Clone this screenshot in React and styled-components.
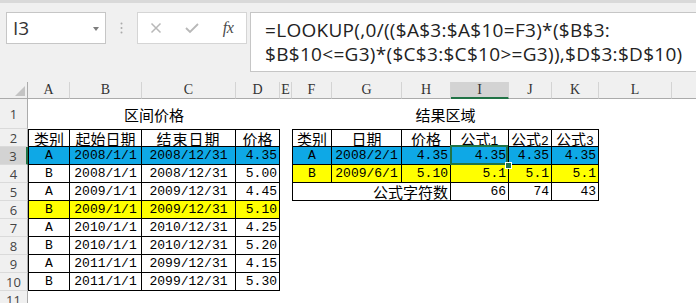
import React from "react";
import styled, { createGlobalStyle, css } from "styled-components";

const BLUE = "#0ea8e6";
const YELLOW = "#ffff00";
const GREEN = "#217346";

// column M runs past the right edge, so its letter is never on screen
const COLS = [
  { key: "A", w: 42 },
  { key: "B", w: 72 },
  { key: "C", w: 94 },
  { key: "D", w: 44 },
  { key: "E", w: 12 },
  { key: "F", w: 40 },
  { key: "G", w: 70 },
  { key: "H", w: 49 },
  { key: "I", w: 58 },
  { key: "J", w: 43 },
  { key: "K", w: 47 },
  { key: "L", w: 73 },
  { key: "M", w: 80, hidden: true },
];

const PRICES = [
  ["A", "2008/1/1", "2008/12/31", "4.35", BLUE],
  ["B", "2008/1/1", "2008/12/31", "5.00"],
  ["A", "2009/1/1", "2009/12/31", "4.45"],
  ["B", "2009/1/1", "2009/12/31", "5.10", YELLOW],
  ["A", "2010/1/1", "2010/12/31", "4.25"],
  ["B", "2010/1/1", "2010/12/31", "5.20"],
  ["A", "2011/1/1", "2099/12/31", "4.15"],
  ["B", "2011/1/1", "2099/12/31", "5.30"],
];

const RESULTS = [
  ["A", "2008/2/1", "4.35", "4.35", "4.35", "4.35", BLUE],
  ["B", "2009/6/1", "5.10", "5.1", "5.1", "5.1", YELLOW],
];

const FORMULA_1 = "=LOOKUP(,0/(($A$3:$A$10=F3)*($B$3:";
const FORMULA_2 = "$B$10<=G3)*($C$3:$C$10>=G3)),$D$3:$D$10)";

const GlobalStyle = createGlobalStyle`
  html, body {
    margin: 0;
    padding: 0;
    background: #fff;
  }
`;

const Window = styled.div`
  width: 696px;
  height: 303px;
  display: flex;
  flex-direction: column;
  overflow: hidden;
  background: #fff;
`;

// Formula bar
const Toolbar = styled.div`
  flex: none;
  height: 82px;
  box-sizing: border-box;
  border-top: 3px solid #d9d9d9;
  padding-top: 9px;
  background: #f0f0f0;
  display: flex;
  align-items: flex-start;
`;

const NameBox = styled.div`
  margin-left: 6px;
  width: 100px;
  height: 32px;
  box-sizing: border-box;
  padding: 0 6px 0 6px;
  background: #fff;
  border: 1px solid #c6c6c6;
  display: flex;
  align-items: center;
  justify-content: space-between;
  font-family: "Open Sans", sans-serif;
  font-size: 19px;
  color: #333;
`;

const Caret = styled.span`
  width: 0;
  height: 0;
  border-left: 3.5px solid transparent;
  border-right: 3.5px solid transparent;
  border-top: 4px solid #7d7d7d;
  margin-top: 1px;
`;

const Grip = styled.div`
  width: 31px;
  height: 32px;
  display: flex;
  align-items: center;
  justify-content: center;
`;

const ActionBox = styled.div`
  width: 110px;
  height: 32px;
  box-sizing: border-box;
  background: #fff;
  border: 1px solid #d5d5d5;
  display: grid;
  grid-template-columns: repeat(3, 36px);
  align-items: center;
  justify-items: center;
`;

const Fx = styled.span`
  font-family: "Liberation Serif", serif;
  font-style: italic;
  font-size: 16px;
  color: #4a4a4a;
  letter-spacing: -0.5px;
`;

const FormulaInput = styled.div`
  flex: 1;
  margin-left: 3px;
  height: 60px;
  box-sizing: border-box;
  padding: 5px 0 0 14px;
  background: #fff;
  border: 1px solid #c6c6c6;
  border-right: none;
  font-family: "Open Sans", sans-serif;
  font-size: 19px;
  letter-spacing: 0.3px;
  line-height: 24px;
  color: #222;
  white-space: nowrap;
`;

// Sheet
const Sheet = styled.div`
  flex: 1;
  min-height: 0;
  display: grid;
  grid-template-columns: 28px ${COLS.map((c) => `${c.w}px`).join(" ")};
  grid-template-rows: 17px 30px repeat(9, 18px) 18px;
  overflow: hidden;
`;

const Corner = styled.div`
  box-sizing: border-box;
  background: #f0f0f0;
  border-right: 1px solid #ababab;
  border-bottom: 1px solid #ababab;
  display: flex;
  align-items: flex-end;
  justify-content: flex-end;
  padding: 0 2px 2px 0;
`;

const CornerMark = styled.span`
  width: 0;
  height: 0;
  border-left: 10px solid transparent;
  border-bottom: 10px solid #c4c4c4;
`;

const ColHead = styled.div`
  box-sizing: border-box;
  background: ${({ $active }) => ($active ? "#d3d3d3" : "#f0f0f0")};
  border-right: 1px solid #d4d4d4;
  border-bottom: ${({ $active }) => ($active ? `2px solid ${GREEN}` : "1px solid #ababab")};
  display: flex;
  align-items: center;
  justify-content: center;
  font-family: "Liberation Serif", serif;
  font-size: 14px;
  color: #333;
`;

const RowHead = styled.div`
  box-sizing: border-box;
  background: ${({ $active }) => ($active ? "#d3d3d3" : "#f0f0f0")};
  border-right: ${({ $active }) => ($active ? `2px solid ${GREEN}` : "1px solid #ababab")};
  border-bottom: 1px solid #dadada;
  display: flex;
  align-items: center;
  justify-content: center;
  font-family: "Open Sans", sans-serif;
  font-size: 13px;
  color: #444;
`;

const Cell = styled.div`
  box-sizing: border-box;
  min-width: 0;
  grid-column: span ${({ $span }) => $span || 1};
  display: flex;
  align-items: center;
  justify-content: ${({ $align }) =>
    $align === "right" ? "flex-end" : $align === "left" ? "flex-start" : "center"};
  padding: 0 2px;
  background: ${({ $fill }) => $fill || "#fff"};
  font-family: "Liberation Mono", "Noto Sans CJK SC", monospace;
  font-size: 13px;
  color: #000;
  white-space: nowrap;

  ${({ $boxed }) =>
    $boxed &&
    css`
      border-right: 1px solid #000;
      border-bottom: 1px solid #000;
    `}
  ${({ $edge }) =>
    $edge &&
    css`
      border-left: 1px solid #000;
    `}
  ${({ $cap }) =>
    $cap &&
    css`
      border-top: 1px solid #000;
    `}
  ${({ $selected }) =>
    $selected &&
    css`
      position: relative;
      z-index: 1;

      &::before {
        content: "";
        position: absolute;
        top: -2px;
        left: -1px;
        right: 0;
        bottom: -1px;
        border: 2px solid ${GREEN};
      }

      &::after {
        content: "";
        position: absolute;
        right: -3px;
        bottom: -4px;
        width: 5px;
        height: 5px;
        background: ${GREEN};
        outline: 1px solid #fff;
      }
    `}
`;

const Han = styled.span`
  font-family: "Noto Sans CJK SC", sans-serif;
  font-size: 15px;
  letter-spacing: ${({ $wide }) => ($wide ? "1px" : "0")};
`;

const CloseIcon = () => (
  <svg width="12" height="12" viewBox="0 0 12 12">
    <path d="M1.5 1.5 L10.5 10.5 M10.5 1.5 L1.5 10.5" stroke="#b8b8b8" strokeWidth="1.5" fill="none" />
  </svg>
);

const CheckIcon = () => (
  <svg width="14" height="12" viewBox="0 0 14 12">
    <path d="M1 6 L5 10 L13 2" stroke="#b8b8b8" strokeWidth="1.8" fill="none" />
  </svg>
);

const GripDots = () => (
  <svg width="3" height="12" viewBox="0 0 3 12">
    <circle cx="1.5" cy="1.5" r="1" fill="#aaa" />
    <circle cx="1.5" cy="6" r="1" fill="#aaa" />
    <circle cx="1.5" cy="10.5" r="1" fill="#aaa" />
  </svg>
);

const Blank = ({ span }) => <Cell $span={span} />;

const PriceHeader = () => (
  <>
    {["类别", "起始日期", "结束日期", "价格"].map((t, i) => (
      <Cell key={t} $boxed $cap $edge={i === 0}>
        <Han $wide={i === 2}>{t}</Han>
      </Cell>
    ))}
  </>
);

const ResultHeader = () => (
  <>
    {[["类别"], ["日期"], ["价格"], ["公式", "1"], ["公式", "2"], ["公式", "3"]].map(([t, n], i) => (
      <Cell key={t + (n || "")} $boxed $cap $edge={i === 0}>
        <span>
          <Han>{t}</Han>
          {n}
        </span>
      </Cell>
    ))}
  </>
);

const PriceRow = ({ row }) => {
  const [kind, start, end, price, fill] = row;
  return (
    <>
      <Cell $boxed $edge $fill={fill}>{kind}</Cell>
      <Cell $boxed $fill={fill}>{start}</Cell>
      <Cell $boxed $fill={fill}>{end}</Cell>
      <Cell $boxed $fill={fill} $align="right">{price}</Cell>
    </>
  );
};

const ResultRow = ({ row, selected }) => {
  const [kind, date, price, f1, f2, f3, fill] = row;
  return (
    <>
      <Cell $boxed $edge $fill={fill}>{kind}</Cell>
      <Cell $boxed $fill={fill}>{date}</Cell>
      <Cell $boxed $fill={fill} $align="right">{price}</Cell>
      <Cell $boxed $fill={fill} $align="right" $selected={selected}>{f1}</Cell>
      <Cell $boxed $fill={fill} $align="right">{f2}</Cell>
      <Cell $boxed $fill={fill} $align="right">{f3}</Cell>
    </>
  );
};

const CountRow = () => (
  <>
    <Cell $boxed $edge $span={3} $align="right">
      <Han>公式字符数</Han>
    </Cell>
    <Cell $boxed $align="right">66</Cell>
    <Cell $boxed $align="right">74</Cell>
    <Cell $boxed $align="right">43</Cell>
  </>
);

const resultPart = (r) => {
  if (r === 3) return <ResultRow row={RESULTS[0]} selected />;
  if (r === 4) return <ResultRow row={RESULTS[1]} />;
  if (r === 5) return <CountRow />;
  return <Blank span={6} />;
};

const App = () => (
  <Window>
    <GlobalStyle />
    <Toolbar>
      <NameBox>
        I3
        <Caret />
      </NameBox>
      <Grip>
        <GripDots />
      </Grip>
      <ActionBox>
        <CloseIcon />
        <CheckIcon />
        <Fx>fx</Fx>
      </ActionBox>
      <FormulaInput>
        {FORMULA_1}
        <br />
        {FORMULA_2}
      </FormulaInput>
    </Toolbar>

    <Sheet>
      <Corner>
        <CornerMark />
      </Corner>
      {COLS.map((c) => (
        <ColHead key={c.key} $active={c.key === "I"}>
          {c.hidden ? null : c.key}
        </ColHead>
      ))}

      <RowHead>1</RowHead>
      <Cell $span={4}>
        <Han>区间价格</Han>
      </Cell>
      <Blank />
      <Cell $span={6}>
        <Han>结果区域</Han>
      </Cell>
      <Blank span={2} />

      <RowHead>2</RowHead>
      <PriceHeader />
      <Blank />
      <ResultHeader />
      <Blank span={2} />

      {PRICES.map((row, i) => {
        const r = i + 3;
        return (
          <React.Fragment key={r}>
            <RowHead $active={r === 3}>{r}</RowHead>
            <PriceRow row={row} />
            <Blank />
            {resultPart(r)}
            <Blank span={2} />
          </React.Fragment>
        );
      })}

      <RowHead>11</RowHead>
      <Blank span={13} />
    </Sheet>
  </Window>
);

export default App;
